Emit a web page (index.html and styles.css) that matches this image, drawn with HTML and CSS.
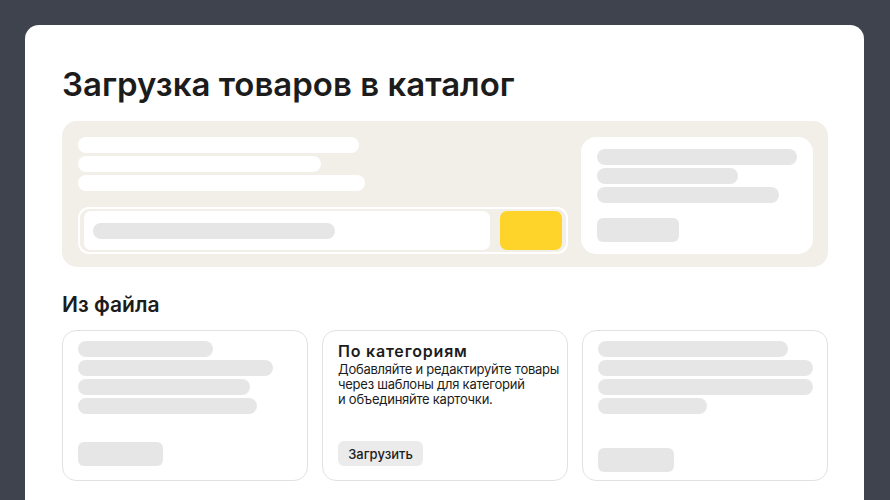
FILE: index.html
```html
<!DOCTYPE html>
<html lang="ru">
<head>
<meta charset="utf-8">
<title>Загрузка товаров в каталог</title>
<link rel="stylesheet" href="styles.css">
</head>
<body>
<main class="page">
  <h1 class="title">Загрузка товаров в каталог</h1>

  <section class="hero">
    <div class="hero-main">
      <div class="bars">
        <span class="bar bar-white" style="width:281px"></span>
        <span class="bar bar-white" style="width:243px"></span>
        <span class="bar bar-white" style="width:287px"></span>
      </div>
      <div class="search">
        <div class="search-input"><span class="bar bar-grey" style="width:242px"></span></div>
        <div class="search-btn"></div>
      </div>
    </div>
    <div class="hero-card">
      <div class="bars">
        <span class="bar bar-grey" style="width:200px"></span>
        <span class="bar bar-grey" style="width:141px"></span>
        <span class="bar bar-grey" style="width:182px"></span>
      </div>
      <span class="ghost-btn" style="width:82px"></span>
    </div>
  </section>

  <h2 class="subtitle">Из файла</h2>

  <section class="cards">
    <div class="card">
      <div class="bars">
        <span class="bar bar-grey" style="width:135px"></span>
        <span class="bar bar-grey" style="width:195px"></span>
        <span class="bar bar-grey" style="width:172px"></span>
        <span class="bar bar-grey" style="width:179px"></span>
      </div>
      <span class="ghost-btn" style="width:85px"></span>
    </div>
    <div class="card">
      <h3 class="card-title">По категориям</h3>
      <p class="card-text">Добавляйте и редактируйте товары<br>через шаблоны для категорий<br>и объединяйте карточки.</p>
      <button class="btn" type="button">Загрузить</button>
    </div>
    <div class="card card-low">
      <div class="bars">
        <span class="bar bar-grey" style="width:190px"></span>
        <span class="bar bar-grey" style="width:215px"></span>
        <span class="bar bar-grey" style="width:215px"></span>
        <span class="bar bar-grey" style="width:109px"></span>
      </div>
      <span class="ghost-btn" style="width:76px"></span>
    </div>
  </section>
</main>
</body>
</html>
```

FILE: styles.css
```css
* { box-sizing: border-box; }

html, body {
  margin: 0;
  height: 100%;
}

body {
  background: #3e434e;
  padding: 25px 0 0 25px;
  font-family: "Inter", "Noto Sans", sans-serif;
  color: #1c1c1c;
  overflow: hidden;
}

.page {
  width: 839px;
  min-height: 500px;
  background: #ffffff;
  border-radius: 14px 14px 0 0;
  padding: 39px 36px 0 37px;
}

.title {
  margin: 0;
  font-size: 33px;
  line-height: 40px;
  font-weight: 600;
  letter-spacing: 0;
}

.hero {
  margin-top: 17px;
  background: #f2efe9;
  border-radius: 15px;
  padding: 16px 15px 13px 16px;
  display: flex;
  gap: 13px;
}

.hero-main {
  width: 490px;
  display: flex;
  flex-direction: column;
  justify-content: space-between;
}

.bars {
  display: flex;
  flex-direction: column;
  gap: 3px;
}

.bar {
  display: block;
  height: 16px;
  border-radius: 8px;
}

.bar-white { background: #ffffff; }
.bar-grey { background: #e6e6e6; }

.search {
  height: 47px;
  border: 2px solid #ffffff;
  border-radius: 11px;
  padding: 2px 4px;
  display: flex;
  gap: 10px;
}

.search-input {
  flex: 1;
  background: #ffffff;
  border-radius: 7px;
  display: flex;
  align-items: center;
  padding-left: 9px;
}

.search-btn {
  width: 62px;
  background: #fed42b;
  border-radius: 7px;
}

.hero-card {
  flex: 1;
  background: #ffffff;
  border-radius: 15px;
  padding: 12px 15px 12px 16px;
  display: flex;
  flex-direction: column;
  justify-content: space-between;
  height: 117px;
}

.ghost-btn {
  display: block;
  height: 24px;
  border-radius: 6px;
  background: #e6e6e6;
}

.subtitle {
  margin: 26px 0 0;
  font-size: 21px;
  line-height: 24px;
  font-weight: 600;
  letter-spacing: 0;
}

.cards {
  margin-top: 13px;
  display: grid;
  grid-template-columns: repeat(3, 246px);
  column-gap: 14px;
}

.card {
  height: 151px;
  border: 1px solid #e2e2e2;
  border-radius: 14px;
  padding: 10px 8px 14px 15px;
  display: flex;
  flex-direction: column;
  align-items: flex-start;
}

.card .ghost-btn { margin-top: auto; }
.card-low { padding-bottom: 8px; }

.card-title {
  margin: 0;
  font-size: 16px;
  line-height: 20px;
  font-weight: 600;
  letter-spacing: 0.8px;
}

.card-text {
  margin: 1px 0 0;
  font-size: 13px;
  line-height: 15px;
  font-weight: 400;
  letter-spacing: -0.25px;
  white-space: nowrap;
}

.btn {
  margin-top: auto;
  height: 25px;
  width: 85px;
  border: 0;
  border-radius: 6px;
  background: #ebebeb;
  font-family: inherit;
  font-size: 13px;
  font-weight: 500;
  color: #1c1c1c;
  padding: 0;
}
```
